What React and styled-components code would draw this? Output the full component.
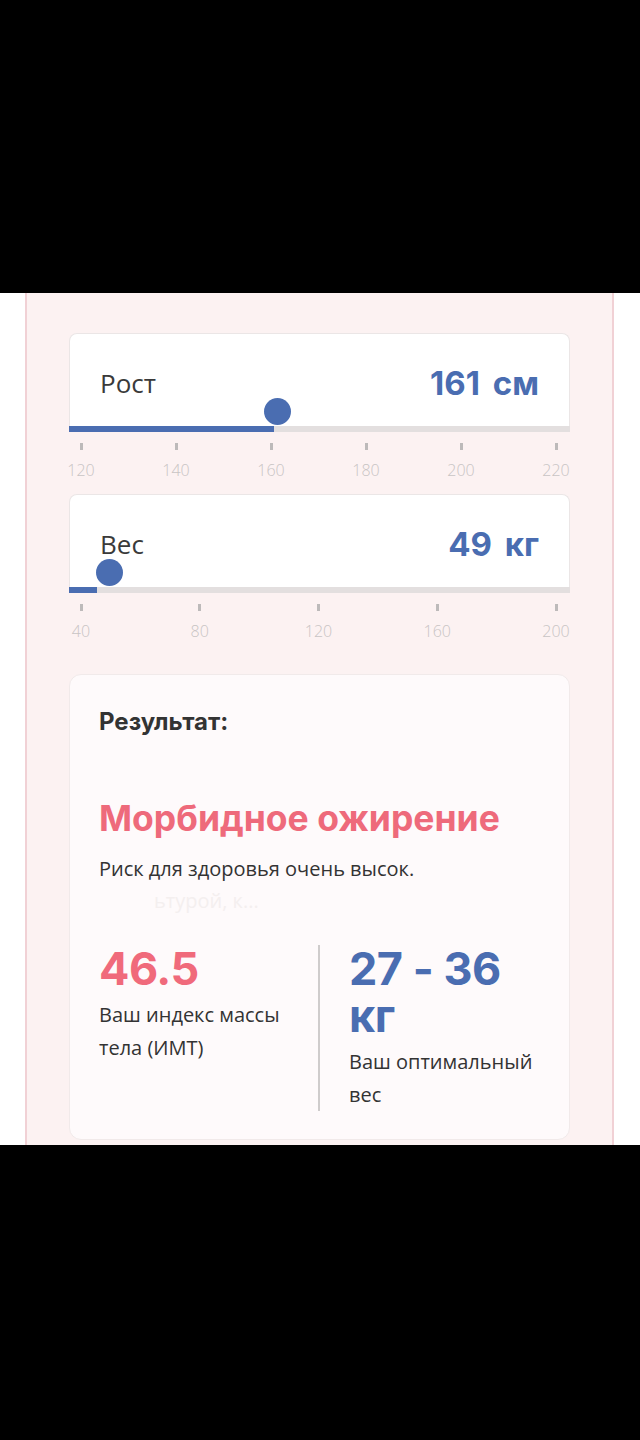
import React from "react";
import styled, { createGlobalStyle } from "styled-components";

const GlobalStyle = createGlobalStyle`
  html, body {
    margin: 0;
    padding: 0;
    background: #000;
  }
  * {
    box-sizing: border-box;
  }
`;

const TopBar = styled.div`
  height: 293px;
  background: #000;
`;

const Screen = styled.div`
  height: 852px;
  background: #fff;
  overflow: hidden;
`;

const Panel = styled.div`
  margin-left: 25px;
  width: 589px;
  min-height: 900px;
  padding: 40px 42px 40px 42px;
  background: #fcf2f2;
  border-left: 2px solid #f1d1d5;
  border-right: 2px solid #f1d1d5;
`;

const SliderCard = styled.div`
  position: relative;
  height: 99px;
  background: #fff;
  border: 1px solid #ebe6e6;
  border-bottom: none;
  border-radius: 8px 8px 0 0;
  display: flex;
  flex-direction: column;
  justify-content: space-between;
`;

const Header = styled.div`
  display: flex;
  justify-content: space-between;
  align-items: center;
  padding: 30px 30px 0 30px;
`;

const Label = styled.span`
  font-family: "Open Sans", "Noto Sans", sans-serif;
  font-size: 26px;
  color: #3a3a3a;
  line-height: 38px;
`;

const Value = styled.span`
  font-family: Inter, "Noto Sans", sans-serif;
  font-weight: 700;
  font-size: 33px;
  word-spacing: 5px;
  color: #4a6db1;
  line-height: 38px;
`;

const Track = styled.div`
  position: relative;
  height: 6px;
  margin: 0 -1px;
  background: #e3dfdf;
`;

const Fill = styled.div`
  height: 100%;
  background: #4a6db1;
`;

const Thumb = styled.div`
  position: absolute;
  bottom: 7px;
  width: 27px;
  height: 27px;
  margin-left: -13px;
  border-radius: 50%;
  background: #4a6db1;
`;

const Ticks = styled.div`
  display: flex;
  justify-content: space-between;
  margin: 11px -4px 14px -6px;
`;

const Tick = styled.div`
  width: 36px;
  display: flex;
  flex-direction: column;
  align-items: center;
  font-family: "Open Sans", "Noto Sans", sans-serif;
  font-weight: 300;
  font-size: 16px;
  line-height: 20px;
  color: #c8c4c4;

  &::before {
    content: "";
    width: 3px;
    height: 7px;
    margin-bottom: 10px;
    background: #bdbaba;
  }
`;

const ResultCard = styled.div`
  margin-top: 33px;
  padding: 32px 29px 28px 29px;
  background: #fefafb;
  border: 1px solid #f1eaea;
  border-radius: 12px;
`;

const ResultTitle = styled.div`
  font-family: Inter, "Noto Sans", sans-serif;
  font-weight: 700;
  font-size: 24px;
  line-height: 29px;
  color: #333;
`;

const Verdict = styled.div`
  margin-top: 62px;
  font-family: Inter, "Noto Sans", sans-serif;
  font-weight: 700;
  font-size: 35.5px;
  line-height: 41px;
  color: #ee6a7b;
`;

const Text = styled.div`
  font-family: "Open Sans", "Noto Sans", sans-serif;
  font-size: 20px;
  line-height: ${(p) => p.$lh || "32px"};
  color: ${(p) => (p.$ghost ? "#f4efef" : "#333")};
  margin-top: ${(p) => p.$mt || "0"};
  margin-left: ${(p) => p.$ml || "0"};
`;

const Stats = styled.div`
  display: flex;
  margin-top: 28px;
`;

const StatLeft = styled.div`
  width: 219px;
  padding-right: 12px;
`;

const Divider = styled.div`
  width: 2px;
  align-self: stretch;
  background: #cfcccc;
`;

const StatRight = styled.div`
  flex: 1;
  padding-left: 29px;
`;

const Big = styled.div`
  font-family: Inter, "Noto Sans", sans-serif;
  font-weight: 700;
  font-size: 45px;
  line-height: 47px;
  letter-spacing: -0.5px;
  color: ${(p) => (p.$pink ? "#f06a7b" : "#4a6db1")};
`;

const Slider = ({ label, value, unit, min, max, ticks }) => {
  const pct = (value - min) / (max - min);
  return (
    <>
      <SliderCard>
        <Header>
          <Label>{label}</Label>
          <Value>
            {value} {unit}
          </Value>
        </Header>
        <Track>
          <Fill style={{ width: `${pct * 100}%` }} />
          <Thumb style={{ left: `calc(${pct} * (100% - 26px) + 13px)` }} />
        </Track>
      </SliderCard>
      <Ticks>
        {ticks.map((t) => (
          <Tick key={t}>{t}</Tick>
        ))}
      </Ticks>
    </>
  );
};

export default function App() {
  return (
    <>
      <GlobalStyle />
      <TopBar />
      <Screen>
        <Panel>
          <Slider
            label="Рост"
            value={161}
            unit="см"
            min={120}
            max={220}
            ticks={[120, 140, 160, 180, 200, 220]}
          />
          <Slider
            label="Вес"
            value={49}
            unit="кг"
            min={40}
            max={200}
            ticks={[40, 80, 120, 160, 200]}
          />
          <ResultCard>
            <ResultTitle>Результат:</ResultTitle>
            <Verdict>Морбидное ожирение</Verdict>
            <Text $mt="14px">Риск для здоровья очень высок.</Text>
            <Text $ghost $ml="55px">ьтурой, к...</Text>
            <Stats>
              <StatLeft>
                <Big $pink>46.5</Big>
                <Text $lh="33px" $mt="6px">
                  Ваш индекс массы тела (ИМТ)
                </Text>
              </StatLeft>
              <Divider />
              <StatRight>
                <Big>27 - 36 кг</Big>
                <Text $lh="33px" $mt="6px">
                  Ваш оптимальный вес
                </Text>
              </StatRight>
            </Stats>
          </ResultCard>
        </Panel>
      </Screen>
    </>
  );
}
